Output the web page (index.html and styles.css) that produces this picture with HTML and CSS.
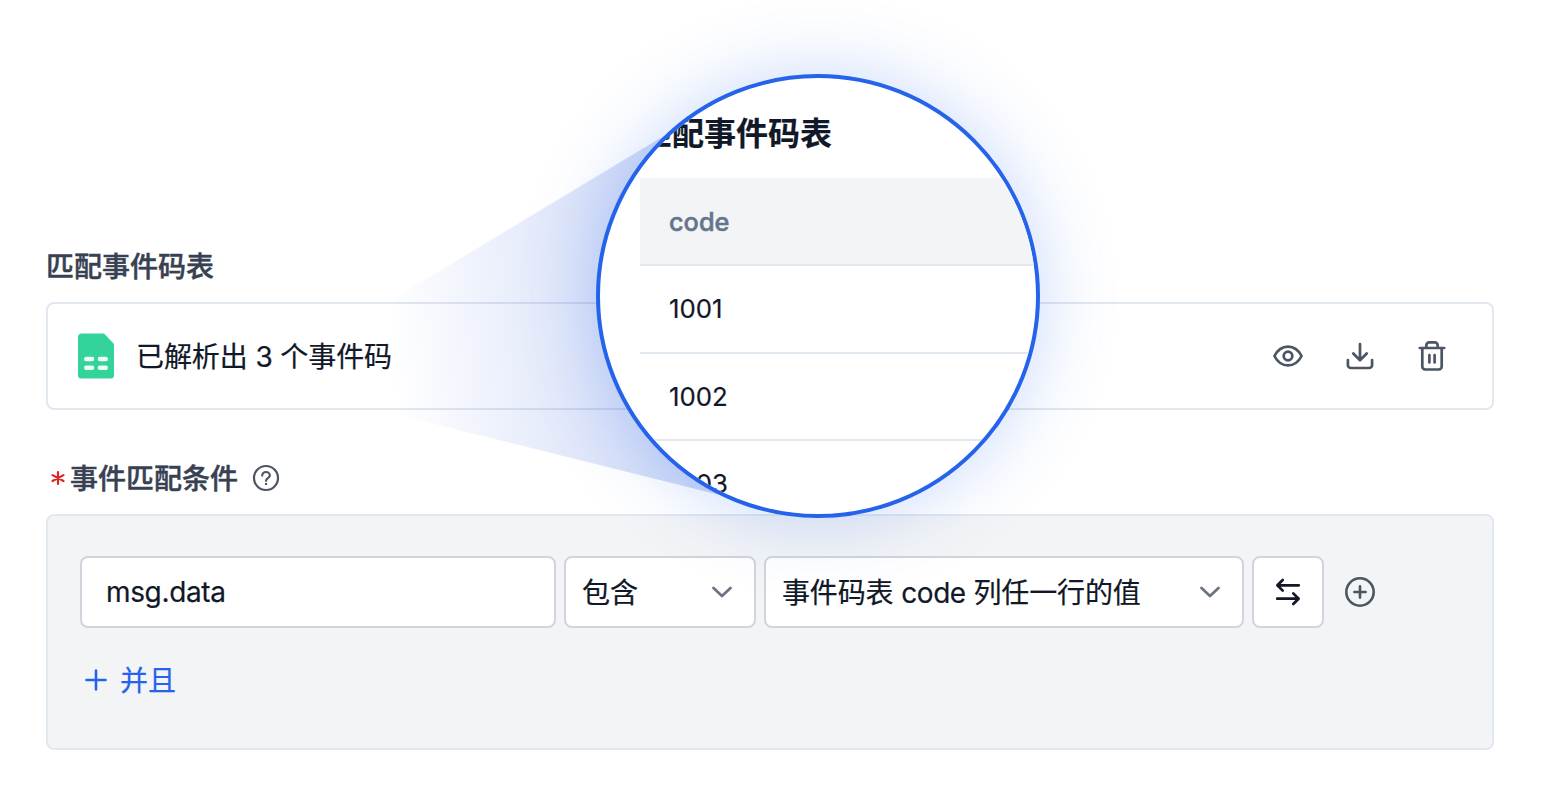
FILE: index.html
```
<!DOCTYPE html>
<html lang="zh-CN">
<head>
<meta charset="utf-8">
<title>匹配事件码表</title>
<link rel="stylesheet" href="styles.css">
</head>
<body>
<main class="page">
  <div class="label">匹配事件码表</div>
  <section class="file-card">
    <svg class="file-icon" width="36" height="46" viewBox="0 0 36 46">
      <path d="M4 .5H26L36 11V42a3.500 3.500 0 0 1-3.500 3.500H3.500A3.500 3.500 0 0 1 0 42V4A3.500 3.500 0 0 1 4 .5Z" fill="#34d399"/>
      <path d="M8.300 26H14M22 26h5.700M8.300 34.700H14M22 34.700h5.700" stroke="#ecfdf5" stroke-width="4.600" stroke-linecap="round"/>
    </svg>
    <span class="file-text">已解析出 3 个事件码</span>
    <div class="actions">
      <svg width="32" height="32" viewBox="0 0 32 32"><path d="M2.400 16C5.500 10 10 6.600 16 6.600S26.500 10 29.600 16C26.500 22 22 25.400 16 25.400S5.500 22 2.400 16Z"/><circle cx="16" cy="16" r="4.300"/></svg>
      <svg width="32" height="32" viewBox="0 0 32 32"><path d="M3.900 20v5a3 3 0 0 0 3 3H25.100a3 3 0 0 0 3-3V20M16 4V20M9.300 13.500 16 20.200l6.700-6.700"/></svg>
      <svg width="32" height="32" viewBox="0 0 32 32"><path d="M3.800 8H28.200M6.300 8V26.500a3 3 0 0 0 3 3H22.700a3 3 0 0 0 3-3V8M10.300 7.500V5.300a3 3 0 0 1 3-3h5.400a3 3 0 0 1 3 3V7.500M13.400 15v7.500M18.600 15v7.500"/></svg>
    </div>
  </section>

  <div class="label label-required">
    <svg class="star" width="14" height="16" viewBox="0 0 14 16"><path d="M7 2V14M1.500 5.100 12.500 11M12.500 5.100 1.500 11"/></svg>
    <span>事件匹配条件</span>
    <svg class="help" width="28" height="28" viewBox="0 0 28 28"><circle cx="14" cy="14" r="12"/><path d="M10.200 11.600c0-2 1.700-3.600 3.800-3.600s3.800 1.500 3.800 3.500c0 2.600-3.800 2.700-3.800 5.300"/><circle class="dot" cx="14" cy="19.900" r="1.200"/></svg>
  </div>
  <section class="conditions">
    <div class="row">
      <div class="field field-key">msg.data</div>
      <div class="field field-op"><span>包含</span><svg width="20" height="12" viewBox="0 0 20 12"><path d="M1.500 2 10 10l8.500-8"/></svg></div>
      <div class="field field-value"><span>事件码表 <span class="latin">code</span> 列任一行的值</span><svg width="20" height="12" viewBox="0 0 20 12"><path d="M1.500 2 10 10l8.500-8"/></svg></div>
      <div class="field field-swap"><svg width="28" height="28" viewBox="0 0 28 28"><path d="M24.800 7.300H3.500M8.700 2 3.400 7.300l5.300 5.300M3.200 20.700H24.500M19.300 15.400l5.300 5.300-5.300 5.300"/></svg></div>
      <svg class="add" width="32" height="32" viewBox="0 0 32 32"><circle cx="16" cy="16" r="13.700"/><path d="M16 10.400v11.200M10.400 16h11.200"/></svg>
    </div>
    <div class="and-link"><svg width="24" height="24" viewBox="0 0 24 24"><path d="M12 2.500v19M2.500 12h19"/></svg><span>并且</span></div>
  </section>

  <svg class="beam" width="400" height="390" viewBox="0 0 400 390">
    <defs>
      <linearGradient id="beam-fill" gradientUnits="userSpaceOnUse" x1="30" y1="230" x2="370" y2="200">
        <stop offset="0" stop-color="#1d4ed8" stop-opacity="0"/>
        <stop offset="1" stop-color="#1d4ed8" stop-opacity=".25"/>
      </linearGradient>
    </defs>
    <path d="M307 14 48 170Q-10 210 12 260T42 296L400 385V14Z" fill="url(#beam-fill)"/>
  </svg>
  <div class="lens">
    <div class="lens-content">
      <div class="lens-title">匹配事件码表</div>
      <div class="cell cell-head">code</div>
      <div class="cell">1001</div>
      <div class="cell">1002</div>
      <div class="cell">1003</div>
    </div>
  </div>
</main>
</body>
</html>
```
FILE: styles.css
```
* { box-sizing: border-box; }
body {
  margin: 0;
  background: #fff;
  color: #111827;
  font: 400 28px/40px Inter, "Noto Sans CJK SC", sans-serif;
  -webkit-text-stroke: .2px currentColor;
}
svg { display: block; flex: none; fill: none; stroke-linecap: round; stroke-linejoin: round; }
.page { position: relative; width: 1542px; height: 794px; padding: 246px 48px 0 46px; overflow: hidden; }
.label {
  height: 40px;
  color: #374151;
  font-weight: 500;
  line-height: 42px;
  white-space: nowrap;
  -webkit-text-stroke-width: .45px;
}
.file-card {
  display: flex;
  align-items: center;
  height: 108px;
  margin-top: 16px;
  padding: 0 44px 0 30px;
  border: 2px solid #e2e8f0;
  border-radius: 8px;
}
.file-text { margin-left: 22px; padding-top: 1px; letter-spacing: -.1px; }
.actions { display: flex; gap: 40px; margin-left: auto; stroke: #4b5563; stroke-width: 2.7; }
.label-required { display: flex; align-items: center; margin-top: 48px; padding-left: 5px; }
.label-required span { padding-top: 2px; }
.star { margin-right: 5px; stroke: #dc2626; stroke-width: 2.2; }
.help { margin-left: 14px; stroke: #4b5563; stroke-width: 2.2; }
.help .dot { fill: #4b5563; stroke: none; }
.conditions {
  height: 236px;
  margin-top: 16px;
  padding: 40px 32px;
  background: #f3f4f6;
  border: 2px solid #e2e8f0;
  border-radius: 8px;
}
.row { display: flex; align-items: center; gap: 8px; }
.field {
  display: flex;
  align-items: center;
  justify-content: space-between;
  height: 72px;
  padding: 0 22px 0 16px;
  background: #fff;
  border: 2px solid #d1d5db;
  border-radius: 8px;
  stroke: #6b7280;
  stroke-width: 2.7;
  white-space: nowrap;
}
.field > span { padding-top: 1px; }
.field-key { width: 476px; padding-left: 24px; letter-spacing: -.35px; }
.field-op { width: 192px; }
.field-value { width: 480px; letter-spacing: -.15px; }
.latin { letter-spacing: -.4px; }
.field-swap { width: 72px; padding: 0; justify-content: center; stroke: #111827; }
.add { margin-left: 12px; stroke: #4b5563; stroke-width: 2.6; }
.and-link { display: flex; align-items: center; gap: 12px; margin-top: 32px; padding-left: 4px; height: 40px; color: #2563eb; stroke: #2563eb; stroke-width: 2.6; }
.and-link span { padding-top: 2px; }
.beam { position: absolute; left: 360px; top: 120px; }
.lens {
  position: absolute;
  left: 596px;
  top: 74px;
  width: 444px;
  height: 444px;
  overflow: hidden;
  background: #fff;
  border: 4px solid #2563eb;
  border-radius: 50%;
  box-shadow: 0 0 76px rgba(37, 99, 235, .25);
}
.lens-content { width: 440px; padding: 32px 0 0 40px; }
.lens-title { height: 68px; font-size: 32px; line-height: 48px; font-weight: 600; }
.cell {
  height: 87.4px;
  padding-left: 29px;
  border-bottom: 2px solid #e2e8f0;
  font-size: 25.800px;
  line-height: 86px;
}
.cell-head { height: 88.200px; background: #f3f4f6; color: #64748b; font-size: 25.300px; line-height: 88px; font-weight: 500; -webkit-text-stroke-width: .5px; }
```
